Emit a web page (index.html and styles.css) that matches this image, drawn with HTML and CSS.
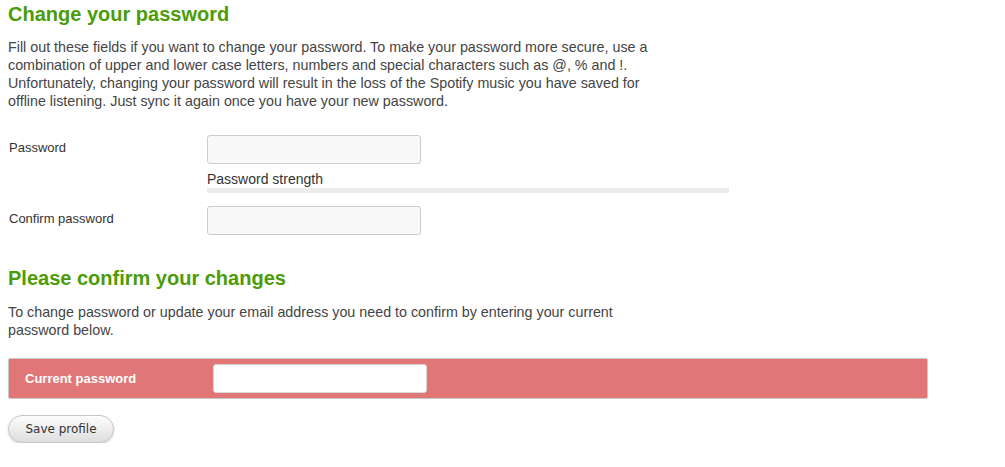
FILE: index.html
```html
<!DOCTYPE html>
<html lang="en">
<head>
  <meta charset="UTF-8" />
  <title>Change your password</title>
  <link rel="stylesheet" href="styles.css">
</head>
<body>

  <main class="profile">

    <h2 class="section-title">Change your password</h2>
    <p class="intro">Fill out these fields if you want to change your password. To make your password more secure, use a combination of upper and lower case letters, numbers and special characters such as @, % and !. Unfortunately, changing your password will result in the loss of the Spotify music you have saved for offline listening. Just sync it again once you have your new password.</p>

    <div class="field">
      <label for="password">Password</label>
      <div class="control">
        <input type="password" id="password" />
        <div class="strength">
          <span>Password strength</span>
          <div class="strength-bar"></div>
        </div>
      </div>
    </div>

    <div class="field">
      <label for="confirm">Confirm password</label>
      <div class="control">
        <input type="password" id="confirm" />
      </div>
    </div>

    <h2 class="section-title confirm-title">Please confirm your changes</h2>
    <p class="intro confirm-intro">To change password or update your email address you need to confirm by entering your current password below.</p>

    <div class="current">
      <label for="current">Current password</label>
      <input type="password" id="current" />
    </div>

    <button type="submit" class="save">Save profile</button>

  </main>

</body>
</html>
```

FILE: styles.css
```css
body {
  font-family: "Liberation Sans", Arial, sans-serif;
  margin: 0;
  padding: 0;
  background: #fff;
  color: #444;
}

.profile {
  padding: 0 8px;
}

.section-title {
  color: #4b9c06;
  font-size: 20px;
  font-weight: bold;
  line-height: 24px;
  margin: 2px 0 12px;
}

.confirm-title {
  margin: 31px 0 13px;
}

.intro {
  max-width: 660px;
  font-size: 14.3px;
  line-height: 18px;
  margin: 0 0 25px;
}

.confirm-intro {
  margin-bottom: 19px;
}

.field {
  display: flex;
  align-items: flex-start;
  margin-bottom: 13px;
}

.field label {
  width: 198px;
  padding-left: 1px;
  font-size: 13px;
  color: #333;
  line-height: 26px;
}

.control {
  flex: 1;
  max-width: 522px;
}

input {
  width: 214px;
  height: 29px;
  box-sizing: border-box;
  border: 1px solid #ccc;
  border-radius: 3px;
  background: #f9f9f9;
  margin: 0;
}

.strength {
  margin-top: 6px;
  font-size: 14px;
  color: #333;
}

.strength span {
  display: block;
  line-height: 18px;
}

.strength-bar {
  height: 5px;
  background: #ececec;
}

.current {
  display: flex;
  align-items: center;
  width: 920px;
  box-sizing: border-box;
  height: 41px;
  padding-left: 16px;
  background: #e07776;
  border: 1px solid #c9c9c9;
  border-radius: 2px;
}

.current label {
  width: 188px;
  color: #fff;
  font-size: 13px;
  font-weight: bold;
}

.current input {
  background: #fff;
  border-color: #d8d8d8;
}

.save {
  margin-top: 16px;
  width: 106px;
  height: 28px;
  font-family: "DejaVu Sans", sans-serif;
  font-size: 12px;
  color: #333;
  border: 1px solid #c6c6c6;
  border-radius: 14px;
  background: linear-gradient(#fdfdfd, #dedede);
  box-shadow: 0 1px 2px rgba(0,0,0,0.2);
  cursor: pointer;
}
```
